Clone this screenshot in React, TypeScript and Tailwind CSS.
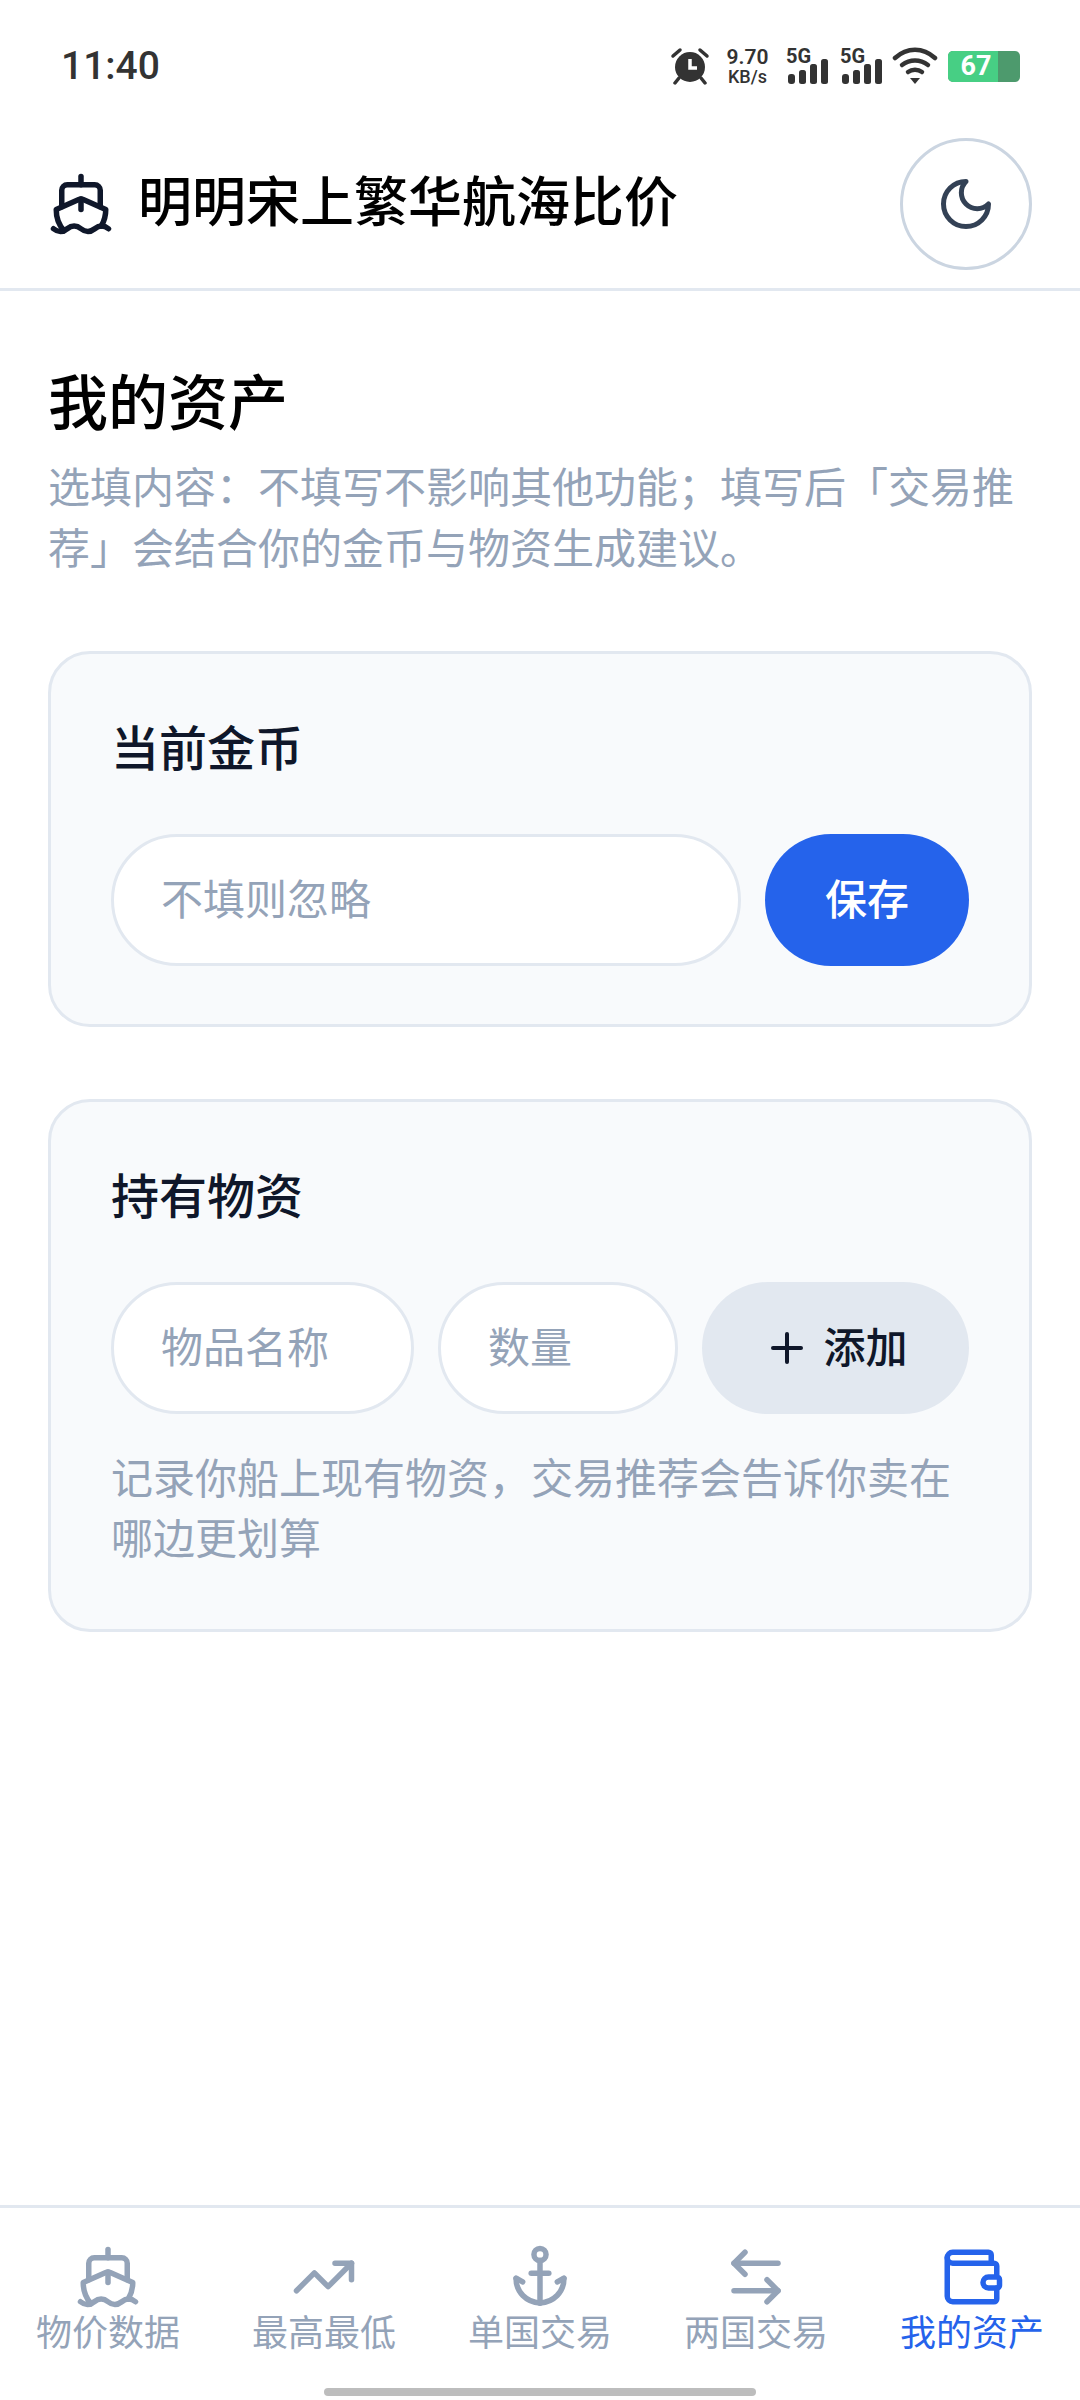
import { ArrowLeftRight, Plus, Ship, TrendingUp, Wallet } from "lucide-react";
import type { SVGProps } from "react";

const CJK = "font-['Roboto','Noto_Sans_CJK_SC',sans-serif]";

type IconProps = { size?: number; strokeWidth?: number };

function strokeProps({ size = 24, strokeWidth = 2 }: IconProps): SVGProps<SVGSVGElement> {
  return {
    width: size,
    height: size,
    viewBox: "0 0 24 24",
    fill: "none",
    stroke: "currentColor",
    strokeWidth,
    strokeLinecap: "round",
    strokeLinejoin: "round",
  };
}

function MoonIcon(props: IconProps) {
  return (
    <svg {...strokeProps(props)}>
      <path d="M12 3a6 6 0 0 0 9 9 9 9 0 1 1-9-9Z" />
    </svg>
  );
}

// ring on top, short crossbar, barbed hooks
function AnchorIcon(props: IconProps) {
  return (
    <svg {...strokeProps(props)}>
      <circle cx="12" cy="3.8" r="2.2" />
      <path d="M12 6v15.5" />
      <path d="M8.8 10.6h6.4" />
      <path d="M3.3 12.5c0 5 3.7 8.6 8.7 9 5-.4 8.7-4 8.7-9" />
      <path d="M3.3 12.4l2.4 1.4M20.7 12.4l-2.4 1.4" />
    </svg>
  );
}

const tabs = [
  { label: "物价数据", Icon: Ship },
  { label: "最高最低", Icon: TrendingUp },
  { label: "单国交易", Icon: AnchorIcon },
  { label: "两国交易", Icon: ArrowLeftRight },
  { label: "我的资产", Icon: Wallet, active: true },
];

function SignalBars() {
  return (
    <div className="flex flex-col items-start">
      <span className="font-['Roboto',sans-serif] text-[20px] leading-[14px] font-bold text-[#333]">5G</span>
      <svg width="42" height="25" viewBox="0 0 42 25" fill="#333" className="-mt-[4px]">
        <rect x="2" y="15" width="7" height="10" rx="3" />
        <rect x="13" y="11" width="7" height="14" rx="2.5" />
        <rect x="24" y="5" width="7" height="20" rx="2.5" />
        <rect x="35" y="0" width="7" height="25" rx="2.5" />
      </svg>
    </div>
  );
}

function StatusBar() {
  return (
    <div className="h-[90px] flex items-center justify-between pt-[42px] pl-[61px] pr-[60px]">
      <span className="font-['Roboto',sans-serif] text-[39px] leading-[48px] font-medium text-[#333]">11:40</span>
      <div className="flex items-center">
        <svg width="40" height="38" viewBox="0 0 40 38" fill="none" className="mr-[15px]">
          <circle cx="20" cy="20" r="15" fill="#333" />
          <path d="M20 12v9h7" stroke="#fff" strokeWidth="3.5" />
          <path d="M3 9 10 3M37 9l-7-6" stroke="#333" strokeWidth="3.5" strokeLinecap="round" />
          <path d="M9 31l-4 5M31 31l4 5" stroke="#333" strokeWidth="3.5" strokeLinecap="round" />
        </svg>
        <div className="w-[45px] mt-[2px] flex flex-col items-center font-['Roboto',sans-serif] text-[#333] mr-[16px]">
          <span className="text-[21px] leading-[20px] font-semibold">9.70</span>
          <span className="text-[18px] leading-[20px] font-medium">KB/s</span>
        </div>
        <div className="mr-[12px]"><SignalBars /></div>
        <div className="mr-[10px]"><SignalBars /></div>
        <svg width="46" height="38" viewBox="0 0 46 38" fill="none" stroke="#333" strokeWidth="4.5" strokeLinecap="round" className="mr-[10px]">
          <path d="M3 11c12-11 28-11 40 0" />
          <path d="M10 18c8-6 18-6 26 0" />
          <path d="M16 25c4-3 10-3 14 0" />
          <path d="M18 31h10l-5 6z" fill="#333" stroke="none" />
        </svg>
        <div className="w-[72px] h-[31px] rounded-[5px] bg-[#4d9a6d] overflow-hidden">
          <div className="w-[50px] h-full bg-[#47cf84] flex items-center justify-center font-['Roboto',sans-serif] text-[27px] leading-none font-bold text-white pl-[6px]">
            67
          </div>
        </div>
      </div>
    </div>
  );
}

function PillInput({ placeholder, className }: { placeholder: string; className: string }) {
  return (
    <input
      placeholder={placeholder}
      className={`${className} h-[132px] min-w-0 rounded-full border-[3px] border-[#e2e8f0] bg-white pl-[47px] text-[42px] outline-none placeholder:text-[#94a3b8]`}
    />
  );
}

export default function App() {
  return (
    <div className={`h-[2400px] flex flex-col bg-white text-[#0f172a] ${CJK}`}>
      <StatusBar />

      <header className="flex items-center justify-between pt-[48px] pb-[18px] pl-[48px] pr-[48px] border-b-[3px] border-[#e2e8f0]">
        <div className="flex items-center gap-[24px]">
          <Ship size={66} strokeWidth={2} />
          <h1 className="text-[54px] leading-[72px] font-medium text-black">明明宋上繁华航海比价</h1>
        </div>
        <button className="w-[132px] h-[132px] rounded-full border-[3px] border-[#cbd5e1] flex items-center justify-center text-[#334155]">
          <MoonIcon size={60} strokeWidth={2} />
        </button>
      </header>

      <main className="flex-1 px-[48px] pt-[72px]">
        <h2 className="text-[60px] leading-[84px] font-medium text-black">我的资产</h2>
        <p className="mt-[11px] text-[42px] leading-[61px] text-[#94a3b8]">
          选填内容：不填写不影响其他功能；填写后「交易推荐」会结合你的金币与物资生成建议。
        </p>

        <section className="mt-[71px] h-[376px] rounded-[42px] border-[3px] border-[#e2e8f0] bg-[#f8fafc] pt-[60px] px-[60px]">
          <h3 className="text-[48px] leading-[72px] font-medium">当前金币</h3>
          <div className="mt-[48px] flex gap-[24px]">
            <PillInput placeholder="不填则忽略" className="flex-1" />
            <button className="w-[204px] h-[132px] rounded-full bg-[#2563eb] text-white text-[42px] font-medium">保存</button>
          </div>
        </section>

        <section className="mt-[72px] h-[533px] rounded-[42px] border-[3px] border-[#e2e8f0] bg-[#f8fafc] pt-[60px] px-[60px]">
          <h3 className="text-[48px] leading-[72px] font-medium">持有物资</h3>
          <div className="mt-[48px] flex gap-[24px]">
            <PillInput placeholder="物品名称" className="w-[303px]" />
            <PillInput placeholder="数量" className="w-[240px]" />
            <button className="flex-1 h-[132px] rounded-full bg-[#e2e8f0] text-[42px] font-medium flex items-center justify-center gap-[12px]">
              <Plus size={48} strokeWidth={2} />
              添加
            </button>
          </div>
          <p className="mt-[36px] text-[42px] leading-[60px] text-[#94a3b8]">
            记录你船上现有物资，交易推荐会告诉你卖在哪边更划算
          </p>
        </section>
      </main>

      <nav className="relative h-[195px] border-t-[3px] border-[#e2e8f0] grid grid-cols-5 pt-[36px]">
        {tabs.map(({ label, Icon, active }) => (
          <div key={label} className={`flex flex-col items-center ${active ? "text-[#2563eb]" : "text-[#94a3b8]"}`}>
            <Icon size={66} strokeWidth={2} />
            <span className="text-[36px] leading-[48px]">{label}</span>
          </div>
        ))}
        <div className="absolute bottom-[4px] left-[324px] w-[432px] h-[8px] rounded-full bg-[#bdbdbd]" />
      </nav>
    </div>
  );
}
